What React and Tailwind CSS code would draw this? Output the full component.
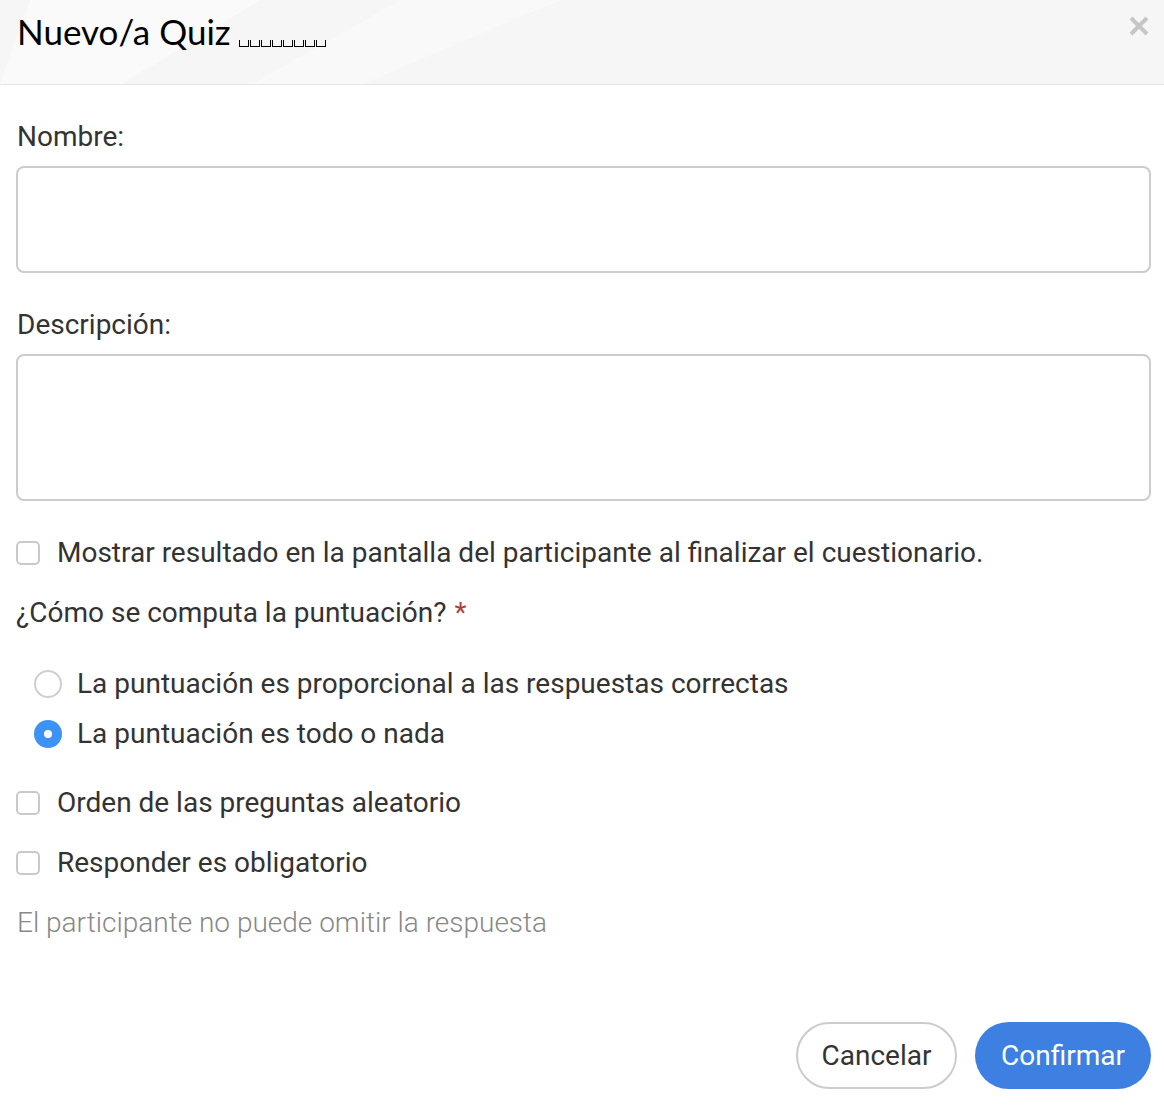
import React from "react";

const Checkbox = () => (
  <span className="w-[24px] h-[24px] rounded-[5px] border-2 border-[#c9c9c9] bg-white shrink-0" />
);

const CheckRow = ({ children }) => (
  <label className="flex items-center h-[36px] gap-[17px]">
    <Checkbox />
    <span>{children}</span>
  </label>
);

const Radio = ({ checked, children }) => (
  <label className="flex items-center h-[36px] gap-[15px] pl-[18px]">
    {checked ? (
      <span className="w-[28px] h-[28px] rounded-full bg-[#3d93f5] flex items-center justify-center shrink-0">
        <span className="w-[8px] h-[8px] rounded-full bg-white" />
      </span>
    ) : (
      <span className="w-[28px] h-[28px] rounded-full border-2 border-[#cfcfcf] bg-white shrink-0" />
    )}
    <span>{children}</span>
  </label>
);

const App = () => {
  return (
    <div className="w-[1164px] h-[1110px] bg-white text-[#333] font-['Roboto',sans-serif] text-[28px] overflow-hidden">
      {/* header */}
      <div className="relative h-[85px] bg-[#f6f6f6] border-b border-[#e6e6e6] overflow-hidden">
        <svg className="absolute inset-0" width="1164" height="85">
          <polygon points="0,85 30,0 260,0 120,85" fill="#fafafa" />
          <polygon points="250,85 400,0 560,0 360,85" fill="#f9f9f9" />
        </svg>
        <div className="relative flex items-start justify-between pl-[17px] pr-[14px] pt-[9px]">
          <h1 className="font-['Lato',sans-serif] text-[35px] leading-[44px] text-black flex items-end">
            Nuevo/a Quiz
            <span className="flex gap-[1px] ml-[8px] mb-[6px]">
              {[0, 1, 2, 3, 4, 5, 6, 7].map((i) => (
                <span key={i} className="w-[10px] h-[7px] border border-black border-t-0" />
              ))}
            </span>
          </h1>
          <svg width="22" height="22" viewBox="0 0 22 22" className="mt-[6px]">
            <path d="M3 3 L19 19 M19 3 L3 19" stroke="#c6c6c6" strokeWidth="4" />
          </svg>
        </div>
      </div>

      {/* body */}
      <div className="pl-[16px] pr-[13px]">
        <div className="mt-[34px] h-[36px] flex items-center pl-[1px]">Nombre:</div>
        <div className="mt-[11px] h-[107px] rounded-[8px] border-2 border-[#cccccc] bg-white" />

        <div className="mt-[34px] h-[36px] flex items-center pl-[1px]">Descripción:</div>
        <div className="mt-[11px] h-[147px] rounded-[8px] border-2 border-[#cccccc] bg-white" />

        <div className="mt-[34px]">
          <CheckRow>
            Mostrar resultado en la pantalla del participante al finalizar el cuestionario.
          </CheckRow>
        </div>

        <div className="mt-[24px] h-[36px] flex items-center">
          ¿Cómo se computa la puntuación?
          <span className="text-[#b0403d] ml-[8px]">*</span>
        </div>

        <div className="mt-[35px] flex flex-col gap-[14px]">
          <Radio>La puntuación es proporcional a las respuestas correctas</Radio>
          <Radio checked>La puntuación es todo o nada</Radio>
        </div>

        <div className="mt-[33px] flex flex-col gap-[24px]">
          <CheckRow>Orden de las preguntas aleatorio</CheckRow>
          <CheckRow>Responder es obligatorio</CheckRow>
        </div>

        <div className="mt-[24px] h-[36px] flex items-center text-[#888] font-light pl-[1px]">
          El participante no puede omitir la respuesta
        </div>

        <div className="mt-[81px] flex justify-end gap-[18px]">
          <button className="w-[161px] h-[67px] rounded-full border-2 border-[#cccccc] bg-white text-[#333] text-[28px]">
            Cancelar
          </button>
          <button className="w-[176px] h-[67px] rounded-full bg-[#3d80e2] text-white text-[28px]">
            Confirmar
          </button>
        </div>
      </div>
    </div>
  );
};

export default App;
